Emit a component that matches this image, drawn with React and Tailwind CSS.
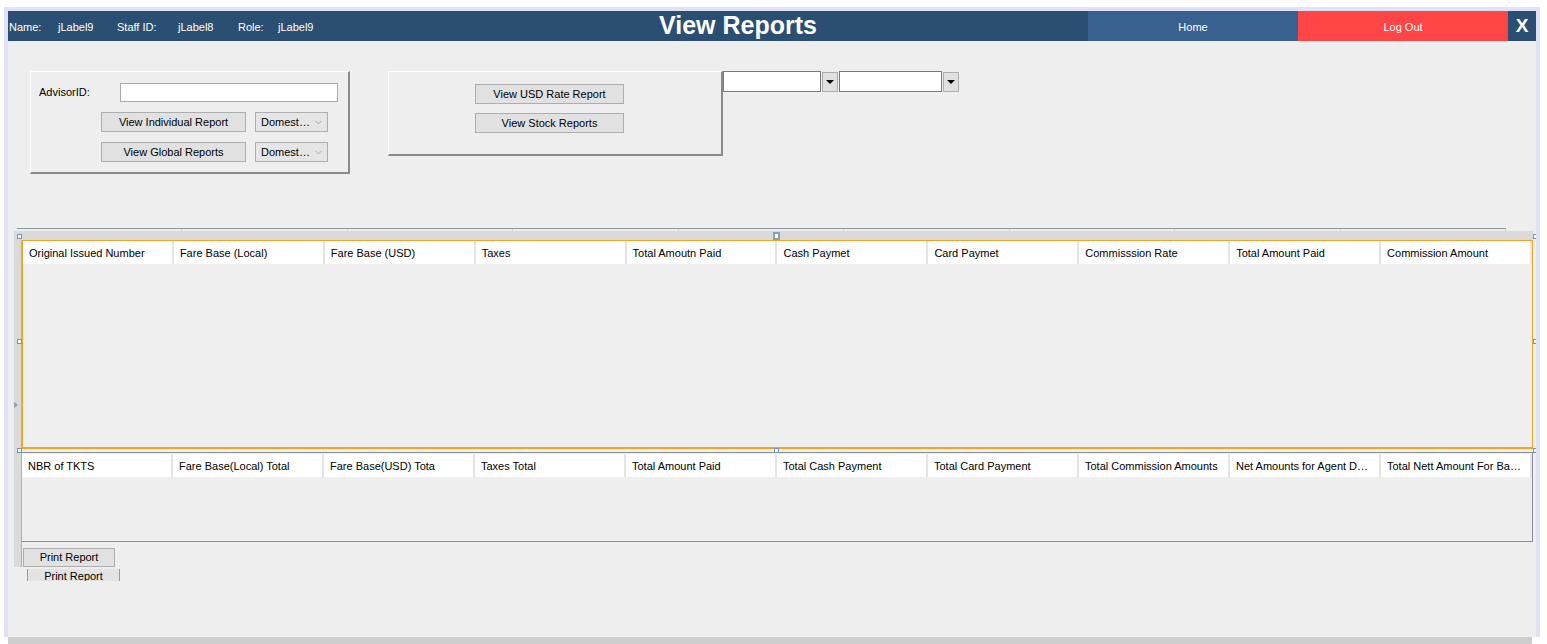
import React from "react";
import { ChevronDown } from "lucide-react";

const topCols = [
  "Original Issued Number",
  "Fare Base (Local)",
  "Fare Base (USD)",
  "Taxes",
  "Total Amoutn Paid",
  "Cash Paymet",
  "Card Paymet",
  "Commisssion Rate",
  "Total Amount Paid",
  "Commission Amount",
];

const bottomCols = [
  "NBR of TKTS",
  "Fare Base(Local) Total",
  "Fare Base(USD) Tota",
  "Taxes Total",
  "Total Amount Paid",
  "Total Cash Payment",
  "Total Card Payment",
  "Total Commission Amounts",
  "Net Amounts for Agent D…",
  "Total Nett Amount For Ba…",
];

const Btn = ({ children, className = "" }) => (
  <button
    className={`h-[20px] border border-[#adadad] bg-[#e1e1e1] text-[11px] text-black ${className}`}
  >
    {children}
  </button>
);

const Combo = () => (
  <div className="flex h-[20px] w-[73px] items-center justify-between border border-[#adadad] bg-[#e5e5e5] pl-[5px] pr-[3px] text-[11px]">
    <span>Domest…</span>
    <ChevronDown size={11} strokeWidth={1.2} className="text-[#777]" />
  </div>
);

const DropArrow = () => (
  <div className="ml-[1px] mt-[1px] flex h-[20px] w-[16px] items-center justify-center border border-[#adadad] bg-[#e0e0e0]">
    <div className="h-0 w-0 border-l-[4px] border-r-[4px] border-t-[4px] border-l-transparent border-r-transparent border-t-black" />
  </div>
);

const HeaderRow = ({ cols }) => (
  <div className="grid h-[23px] shrink-0 grid-cols-10">
    {cols.map((c, i) => (
      <div
        key={i}
        className="flex items-center overflow-hidden whitespace-nowrap border-r-2 border-[#e4e4e4] bg-white pl-[6px] pt-[1px] text-[11px] text-black"
      >
        {c}
      </div>
    ))}
  </div>
);

const Handle = ({ className }) => (
  <div className={`absolute h-[5px] w-[5px] border border-[#7b93ad] bg-[#f4f8fc] ${className}`} />
);

export default function App() {
  return (
    <div className="flex h-[644px] w-[1547px] flex-col overflow-hidden bg-white pt-[7px] font-['Liberation_Sans',Arial,sans-serif]">
      <div className="ml-[4px] flex h-[630px] w-[1536px] shrink-0 flex-col border-x-4 border-t-4 border-[#e0e0f8]">
        {/* header bar */}
        <div className="flex h-[30px] shrink-0 items-stretch bg-[#2a4f73] text-white">
          <div className="flex w-[640px] items-center pl-[1px] pt-[2px] text-[11px]">
            <span className="w-[49px]">Name:</span>
            <span className="w-[59px]">jLabel9</span>
            <span className="w-[61px]">Staff ID:</span>
            <span className="w-[60px]">jLabel8</span>
            <span className="w-[40px]">Role:</span>
            <span>jLabel9</span>
          </div>
          <div className="flex w-[180px] items-center justify-center text-[25px] font-bold">
            View Reports
          </div>
          <div className="flex-1" />
          <div className="flex w-[210px] items-center justify-center bg-[#38618f] pt-[2px] text-[11px]">
            Home
          </div>
          <div className="flex w-[210px] items-center justify-center bg-[#ff4545] pt-[2px] text-[11px]">
            Log Out
          </div>
          <div className="flex w-[28px] items-center justify-center text-[19px] font-bold">X</div>
        </div>

        {/* body */}
        <div className="flex-1 overflow-hidden bg-[#eeeeee] text-black">
          <div className="flex items-start pl-[22px] pt-[30px]">
            <div className="h-[103px] w-[320px] border-b-2 border-l border-r-2 border-t border-b-[#8a8a8a] border-l-white border-r-[#8a8a8a] border-t-white pl-[8px] pt-[11px]">
              <div className="flex h-[19px] items-center">
                <span className="w-[81px] text-[11px]">AdvisorID:</span>
                <div className="h-[19px] w-[218px] border border-[#aaaaaa] bg-white" />
              </div>
              <div className="mt-[10px] flex gap-[9px] pl-[62px]">
                <Btn className="w-[145px]">View Individual Report</Btn>
                <Combo />
              </div>
              <div className="mt-[10px] flex gap-[9px] pl-[62px]">
                <Btn className="w-[145px]">View Global Reports</Btn>
                <Combo />
              </div>
            </div>

            <div className="ml-[38px] h-[85px] w-[335px] border-b-2 border-l border-r-2 border-t border-b-[#8a8a8a] border-l-white border-r-[#8a8a8a] border-t-white pl-[86px] pt-[12px]">
              <Btn className="block w-[149px]">View USD Rate Report</Btn>
              <Btn className="mt-[9px] block w-[149px]">View Stock Reports</Btn>
            </div>

            <div className="flex items-start">
              <div className="h-[21px] w-[98px] border border-[#7a7a7a] bg-white" />
              <DropArrow />
              <div className="ml-[1px] h-[21px] w-[103px] border border-[#7a7a7a] bg-white" />
              <DropArrow />
            </div>
          </div>

          {/* tables */}
          <div className="relative mt-[54px]">
            <div className="ml-[9px] flex h-[3px] w-[1489px] border-t border-[#8d98a4]">
              {Array.from({ length: 9 }).map((_, i) => (
                <div key={i} className="flex-1 border-r border-[#cfd4d9]" />
              ))}
            </div>
            <div className="ml-[6px] h-[336px] w-[1519px] bg-[#dadada] pl-[7px] pt-[9px]">
              <div className="flex h-full w-[1512px] flex-col border-l border-[#9db3cb] bg-[#eeeeee]">
                <div className="flex h-[209px] shrink-0 flex-col border border-b-2 border-[#f2a623] bg-[#efefef]">
                  <HeaderRow cols={topCols} />
                </div>
                <div className="mt-[3px] h-[90px] shrink-0 border-b border-r border-t border-[#8b9098] pt-[1px]">
                  <HeaderRow cols={bottomCols} />
                </div>
                <button className="ml-[1px] mt-[6px] block h-[19px] w-[92px] shrink-0 border border-[#adadad] bg-[#e1e1e1] text-[11px]">
                  Print Report
                </button>
              </div>
            </div>
            <div className="ml-[19px] mt-[2px] h-[12px] w-[93px] overflow-hidden border-x border-[#9a9a9a] bg-[#e3e3e3] text-center text-[11px] leading-[15px]">
              Print Report
            </div>

            <Handle className="left-[9px] top-[6px]" />
            <Handle className="left-[1525px] top-[6px]" />
            <Handle className="left-[9px] top-[111px]" />
            <Handle className="left-[1525px] top-[111px]" />
            <Handle className="left-[9px] top-[220px]" />
            <Handle className="left-[766px] top-[220px]" />
            <Handle className="left-[1525px] top-[220px]" />
            <div className="absolute left-[765px] top-[4px] flex h-[8px] w-[7px] items-center justify-center bg-[#8aa0b8]">
              <div className="h-[4px] w-[3px] bg-white" />
            </div>
            <div className="absolute left-[6px] top-[174px] h-0 w-0 border-b-[3px] border-l-[4px] border-t-[3px] border-b-transparent border-l-[#8aa0b8] border-t-transparent" />
          </div>
        </div>
      </div>
      <div className="ml-[8px] h-[7px] w-[1524px] shrink-0 bg-[#cdcdcd]" />
    </div>
  );
}
